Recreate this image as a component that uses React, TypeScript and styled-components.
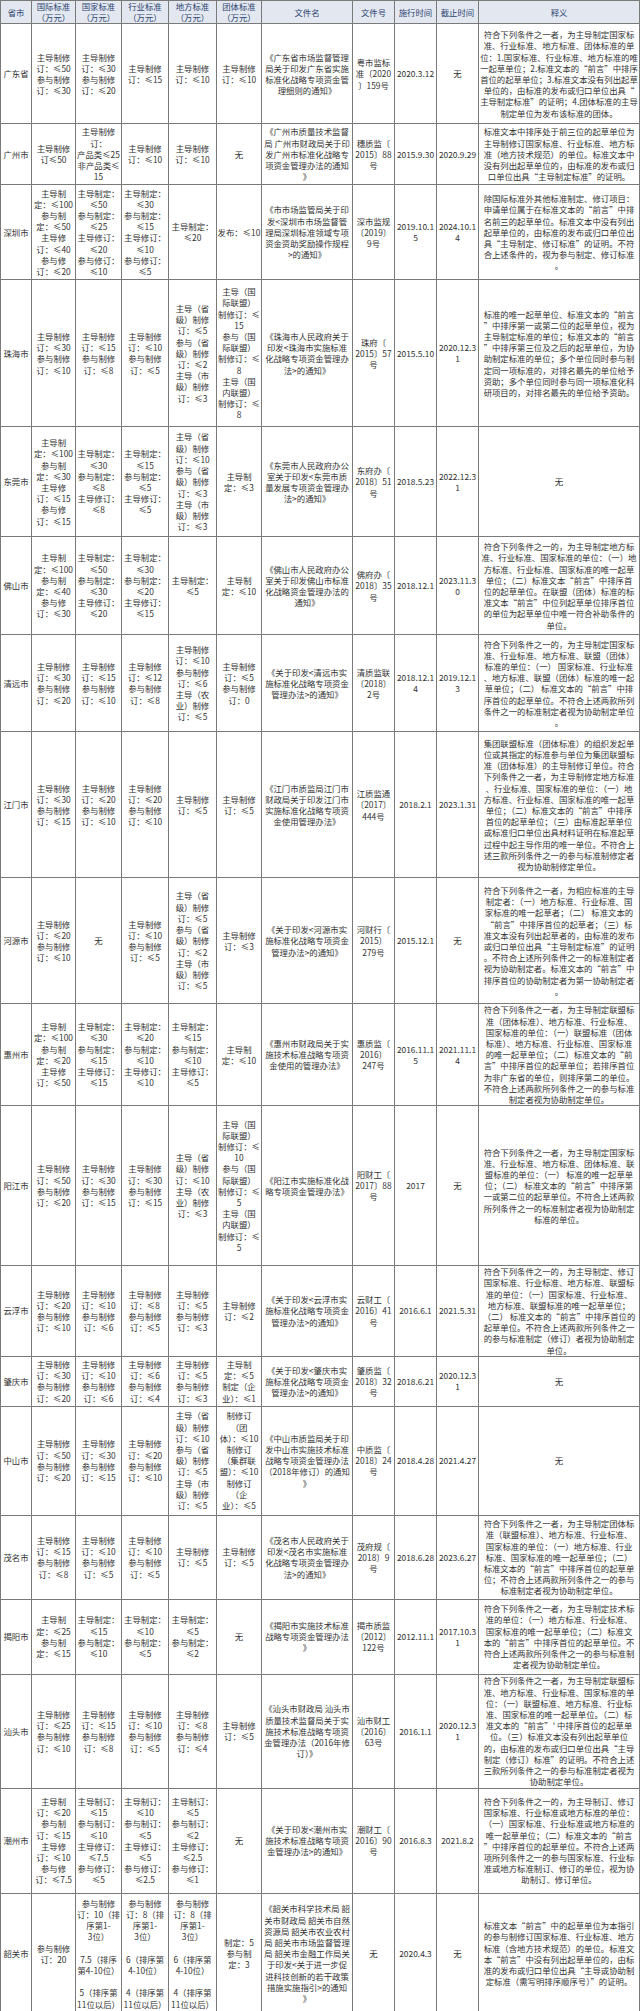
import React from "react";
import styled, { createGlobalStyle } from "styled-components";

const GlobalStyle = createGlobalStyle`
  html, body { margin: 0; padding: 0; background: #ffffff; }
  body { font-family: "Noto Sans CJK SC", "Noto Sans", sans-serif; }
`;

const Table = styled.table`
  border-collapse: collapse;
  table-layout: fixed;
  width: 639px;
  font-family: "Noto Sans CJK SC", "Noto Sans", sans-serif;
  font-size: 8.4px;
  line-height: 11.2px;
  color: #333333;
`;

const HeadRow = styled.tr`
  height: 23px;
`;

const HeadCell = styled.th`
  background: #e3e8f0;
  color: #2d4470;
  font-weight: normal;
  border: 1px solid #7a7a7a;
  text-align: center;
  vertical-align: middle;
  padding: 0;
  white-space: nowrap;
`;

const Row = styled.tr<{ $h: number }>`
  height: ${(p) => p.$h}px;
`;

const Cell = styled.td`
  border: 1px solid #7a7a7a;
  text-align: center;
  vertical-align: middle;
  padding: 0;
  white-space: nowrap;
  overflow: visible;
`;

const widths = [31, 44, 46, 47, 48, 45, 91, 42, 42, 42, 161];

const headers = [
  "省市",
  "国际标准|（万元）",
  "国家标准|（万元）",
  "行业标准|（万元）",
  "地方标准|（万元）",
  "团体标准|（万元）",
  "文件名",
  "文件号",
  "施行时间",
  "截止时间",
  "释义",
];

type RowData = { h: number; c: string[] };

const rows: RowData[] = [
  {
    h: 100,
    c: [
      "广东省",
      "主导制修|订：≤50|参与制修|订：≤30",
      "主导制修|订：≤30|参与制修|订：≤20",
      "主导制修|订：≤15",
      "主导制修|订：≤10",
      "主导制修|订：≤10",
      "《广东省市场监督管理|局关于印发广东省实施|标准化战略专项资金管|理细则的通知》",
      "粤市监标|准〔2020|〕159号",
      "2020.3.12",
      "无",
      "符合下列条件之一者，为主导制定国家标|准、行业标准、地方标准、团体标准的单|位：1.国家标准、行业标准、地方标准的唯|一起草单位；2.标准文本的“前言”中排序|首位的起草单位；3.标准文本没有列出起草|单位的，由标准的发布或归口单位出具“|主导制定标准”的证明；4.团体标准的主导|制定单位为发布该标准的团体。",
    ],
  },
  {
    h: 61,
    c: [
      "广州市",
      "主导制修|订≤50",
      "主导制修|订：|产品类≤25|非产品类≤|15",
      "主导制修|订：≤10",
      "主导制修|订：≤10",
      "无",
      "《广州市质量技术监督|局 广州市财政局关于印|发广州市标准化战略专|项资金管理办法的通知|》",
      "穗质监〔|2015〕88|号",
      "2015.9.30",
      "2020.9.29",
      "标准文本中排序处于前三位的起草单位为|主导制修订国家标准、行业标准、地方标|准（地方技术规范）的单位。标准文本中|没有列出起草单位的，由标准的发布或归|口单位出具“主导制定标准”的证明。",
    ],
  },
  {
    h: 95,
    c: [
      "深圳市",
      "主导制|定：≤100|参与制|定：≤50|主导修|订：≤40|参与修|订：≤20",
      "主导制定：|≤50|参与制定：|≤25|主导修订：|≤20|参与修订：|≤10",
      "主导制定：|≤30|参与制定：|≤15|主导修订：|≤10|参与修订：|≤5",
      "主导制定：|≤20",
      "发布：≤10",
      "《市市场监管局关于印|发<深圳市市场监督管|理局深圳标准领域专项|资金资助奖励操作规程|>的通知》",
      "深市监规|〔2019〕|9号",
      "2019.10.1|5",
      "2024.10.1|4",
      "除国际标准外其他标准制定、修订项目：|申请单位属于在标准文本的“前言”中排|名前三的起草单位。标准文本中没有列出|起草单位的，由标准的发布或归口单位出|具“主导制定、修订标准”的证明。不符|合上述条件的，视为参与制定、修订标准|。",
    ],
  },
  {
    h: 147,
    c: [
      "珠海市",
      "主导制修|订：≤30|参与制修|订：≤10",
      "主导制修|订：≤15|参与制修|订：≤8",
      "主导制修|订：≤10|参与制修|订：≤5",
      "主导（省|级）制修|订：≤5|参与（省|级）制修|订：≤2|主导（市|级）制修|订：≤3",
      "主导（国|际联盟）|制修订：≤|15|参与（国|际联盟）|制修订：≤|8|主导（国|内联盟）|制修订：≤|8",
      "《珠海市人民政府关于|印发<珠海市实施标准|化战略专项资金管理办|法>的通知》",
      "珠府〔|2015〕57|号",
      "2015.5.10",
      "2020.12.3|1",
      "标准的唯一起草单位、标准文本的“前言|”中排序第一或第二位的起草单位，视为|主导制定标准的单位；标准文本的“前言|”中排序第三位及之后的起草单位，为协|助制定标准的单位；多个单位同时参与制|定同一项标准的，对排名最先的单位给予|资助；多个单位同时参与同一项标准化科|研项目的，对排名最先的单位给予资助。",
    ],
  },
  {
    h: 110,
    c: [
      "东莞市",
      "主导制|定：≤100|参与制|定：≤30|主导修|订：≤15|参与修|订：≤15",
      "主导制定：|≤30|参与制定：|≤8|主导修订：|≤8",
      "主导制定：|≤15|参与制定：|≤5|主导修订：|≤5",
      "主导（省|级）制修|订：≤10|参与（省|级）制修|订：≤3|主导（市|级）制修|订：≤3",
      "主导制|定：≤3",
      "《东莞市人民政府办公|室关于印发<东莞市质|量发展专项资金管理办|法>的通知》",
      "东府办〔|2018〕51|号",
      "2018.5.23",
      "2022.12.3|1",
      "无",
    ],
  },
  {
    h: 98,
    c: [
      "佛山市",
      "主导制|定：≤100|参与制|定：≤40|参与修|订：≤30",
      "主导制定：|≤50|参与制定：|≤30|主导修订：|≤20",
      "主导制定：|≤30|参与制定：|≤20|主导修订：|≤15",
      "主导制定：|≤5",
      "主导制|定：≤10",
      "《佛山市人民政府办公|室关于印发佛山市标准|化战略资金管理办法的|通知》",
      "佛府办〔|2018〕35|号",
      "2018.12.1",
      "2023.11.3|0",
      "符合下列条件之一的，为主导制定地方标|准、行业标准、国家标准的单位：（一）地|方标准、行业标准、国家标准的唯一起草|单位；（二）标准文本“前言”中排序首|位的起草单位。在联盟（团体）标准的标|准文本“前言”中位列起草单位排序首位|的单位为起草单位中唯一符合补助条件的|单位。",
    ],
  },
  {
    h: 97,
    c: [
      "清远市",
      "主导制修|订：≤30|参与制修|订：≤20",
      "主导制修|订：≤15|参与制修|订：≤10",
      "主导制修|订：≤12|参与制修|订：≤8",
      "主导制修|订：≤10|参与制修|订：≤6|主导（农|业）制修|订：≤5",
      "主导制修|订：≤5|参与制修|订：0",
      "《关于印发<清远市实|施标准化战略专项资金|管理办法>的通知》",
      "清质监联|〔2018〕|2号",
      "2018.12.1|4",
      "2019.12.1|3",
      "符合下列条件之一的，为主导制定国家标|准、行业标准、地方标准、联盟（团体）|标准的单位：（一） 国家标准、行业标准|、地方标准、联盟（团体）标准的唯一起|草单位；（二） 标准文本的“前言”中排|序首位的起草单位。不符合上述两款所列|条件之一的标准制定者视为协助制定单位|。",
    ],
  },
  {
    h: 146,
    c: [
      "江门市",
      "主导制修|订：≤30|参与制修|订：≤15",
      "主导制修|订：≤20|参与制修|订：≤10",
      "主导制修|订：≤20|参与制修|订：≤10",
      "主导制修|订：≤5",
      "主导制修|订：≤5",
      "《江门市质监局江门市|财政局关于印发江门市|实施标准化战略专项资|金使用管理办法》",
      "江质监通|〔2017〕|444号",
      "2018.2.1",
      "2023.1.31",
      "集团联盟标准（团体标准）的组织发起单|位或其指定的标准参与单位为集团联盟标|准（团体标准）的主导制修订单位。符合|下列条件之一者，为主导制修定地方标准|、行业标准、国家标准的单位：（一）地|方标准、行业标准、国家标准的唯一起草|单位；（二）标准文本的“前言”中排序|首位的起草单位；（三）由标准起草单位|或标准归口单位出具材料证明在标准起草|过程中起主导作用的唯一单位。不符合上|述三款所列条件之一的参与标准制修定者|视为协助制修定单位。",
    ],
  },
  {
    h: 126,
    c: [
      "河源市",
      "主导制修|订：≤20|参与制修|订：≤10",
      "无",
      "主导制修|订：≤10|参与制修|订：≤5",
      "主导（省|级）制修|订：≤5|参与（省|级）制修|订：≤2|主导（市|级）制修|订：≤5",
      "主导制修|订：≤3",
      "《关于印发<河源市实|施标准化战略专项资金|管理办法>的通知》",
      "河财行〔|2015〕|279号",
      "2015.12.1",
      "无",
      "符合下列条件之一者，为相应标准的主导|制定者：（一）地方标准、行业标准、国|家标准的唯一起草者；（二） 标准文本的|“前言”中排序首位的起草者；（三）标|准文本没有列出起草者的，由标准的发布|或归口单位出具“主导制定标准”的证明|。不符合上述所列条件之一的标准制定者|视为协助制定者。标准文本的“前言”中|排序首位的协助制定者为第一协助制定者|。",
    ],
  },
  {
    h: 101,
    c: [
      "惠州市",
      "主导制|定：≤100|参与制|定：≤20|主导修|订：≤50",
      "主导制定：|≤30|参与制定：|≤15|主导修订：|≤15",
      "主导制定：|≤20|参与制定：|≤10|主导修订：|≤10",
      "主导制定：|≤15|参与制定：|≤10|主导修订：|≤5",
      "主导制|定：≤10",
      "《惠州市财政局关于实|施技术标准战略专项资|金使用的管理办法》",
      "惠质监〔|2016〕|247号",
      "2016.11.1|5",
      "2021.11.1|4",
      "符合下列条件之一者，为主导制定联盟标|准（团体标准）、地方标准、行业标准、|国家标准的单位：（一）联盟标准（团体|标准）、地方标准、行业标准、国家标准|的唯一起草单位；（二）标准文本的“前|言”中排序首位的起草单位；若排序首位|为非广东省的单位，则排序第二的单位。|不符合上述两款所列条件之一的参与标准|制定者视为协助制定单位。",
    ],
  },
  {
    h: 160,
    c: [
      "阳江市",
      "主导制修|订：≤50|参与制修|订：≤20",
      "主导制修|订：≤30|参与制修|订：≤15",
      "主导制修|订：≤30|参与制修|订：≤15",
      "主导（省|级）制修|订：≤10|主导（农|业）制修|订：≤3",
      "主导（国|际联盟）|制修订：≤|10|参与（国|际联盟）|制修订：≤|5|主导（国|内联盟）|制修订：≤|5",
      "《阳江市实施标准化战|略专项资金管理办法》",
      "阳财工〔|2017〕88|号",
      "2017",
      "无",
      "符合下列条件之一者，为主导制定国家标|准、行业标准、地方标准、团体标准、联|盟标准的单位：（一） 标准的唯一起草单|位；（二） 标准文本的“前言”中排序第|一或第二位的起草单位。不符合上述两款|所列条件之一的标准制定者视为协助制定|标准的单位。",
    ],
  },
  {
    h: 87,
    c: [
      "云浮市",
      "主导制修|订：≤20|参与制修|订：≤10",
      "主导制修|订：≤10|参与制修|订：≤6",
      "主导制修|订：≤8|参与制修|订：≤5",
      "主导制修|订：≤5|参与制修|订：≤3",
      "主导制修|订：≤2",
      "《关于印发<云浮市实|施标准化战略专项资金|管理办法>的通知》",
      "云财工〔|2016〕41|号",
      "2016.6.1",
      "2021.5.31",
      "符合下列条件之一的，为主导制定、修订|国家标准、行业标准、地方标准、联盟标|准的单位：（一）国家标准、行业标准、|地方标准、联盟标准的唯一起草单位；|（二） 标准文本的“前言”中排序首位的|起草单位。不符合上述两款所列条件之一|的参与标准制定（修订）者视为协助制定|单位。",
    ],
  },
  {
    h: 50,
    c: [
      "肇庆市",
      "主导制修|订：≤30|参与制修|订：≤20",
      "主导制修|订：≤10|参与制修|订：≤6",
      "主导制修|订：≤6|参与制修|订：≤4",
      "主导制修|订：≤5|参与制修|订：≤3",
      "主导制|定：≤5|制定（企|业）：≤1",
      "《关于印发<肇庆市实|施标准化战略专项资金|管理办法>的通知》",
      "肇质监〔|2018〕32|号",
      "2018.6.21",
      "2020.12.3|1",
      "无",
    ],
  },
  {
    h: 109,
    c: [
      "中山市",
      "主导制修|订：≤50|参与制修|订：≤20",
      "主导制修|订：≤30|参与制修|订：≤15",
      "主导制修|订：≤20|参与制修|订：≤10",
      "主导（省|级）制修|订：≤10|参与（省|级）制修|订：≤5|主导（市|级）制修|订：≤5",
      "制修订|（团|体）：≤10|制修订|（集群联|盟）：≤10|制修订|（企|业）：≤5",
      "《中山市质监局关于印|发中山市实施技术标准|战略专项资金管理办法|（2018年修订）的通知|》",
      "中质监〔|2018〕24|号",
      "2018.4.28",
      "2021.4.27",
      "无",
    ],
  },
  {
    h: 84,
    c: [
      "茂名市",
      "主导制修|订：≤15|参与制修|订：≤8",
      "主导制修|订：≤10|参与制修|订：≤5",
      "主导制修|订：≤10|参与制修|订：≤5",
      "主导制修|订：≤5",
      "主导制修|订：≤5",
      "《茂名市人民政府关于|印发<茂名市实施标准|化战略专项资金管理办|法>的通知》",
      "茂府规〔|2018〕9|号",
      "2018.6.28",
      "2023.6.27",
      "符合下列条件之一者，为主导制定团体标|准（联盟标准）、地方标准、行业标准、|国家标准的单位：（一）地方标准、行业|标准、国家标准的唯一起草单位；（二）|标准文本的“前言”中排序首位的起草单|位；不符合上述两款所列条件之一的参与|标准制定者视为协助制定单位。",
    ],
  },
  {
    h: 75,
    c: [
      "揭阳市",
      "主导制|定：≤25|参与制|定：≤15",
      "主导制定：|≤15|参与制定：|≤10",
      "主导制定：|≤10|参与制定：|≤5",
      "主导制定：|≤5|参与制定：|≤2",
      "无",
      "《揭阳市实施技术标准|战略专项资金管理办法|》",
      "揭市质监|〔2012〕|122号",
      "2012.11.1",
      "2017.10.3|1",
      "符合下列条件之一者，为主导制定技术标|准的单位：（一）地方标准、行业标准、|国家标准的唯一起草单位；（二）标准文|本的“前言”中排序首位的起草单位。不|符合上述两款所列条件之一的参与标准制|定者视为协助制定单位。",
    ],
  },
  {
    h: 114,
    c: [
      "汕头市",
      "主导制修|订：≤25|参与制修|订：≤10",
      "主导制修|订：≤15|参与制修|订：≤8",
      "主导制修|订：≤10|参与制修|订：≤5",
      "主导制修|订：≤8|参与制修|订：≤4",
      "主导制修|订：≤5",
      "《汕头市财政局 汕头市|质量技术监督局关于实|施技术标准战略专项资|金管理办法（2016年修|订）》",
      "汕市财工|〔2016〕|63号",
      "2016.1.1",
      "2020.12.3|1",
      "符合下列条件之一者，为主导制定联盟标|准、地方标准、行业标准、国家标准的单|位：（一）联盟标准、地方标准、行业标|准、国家标准的唯一起草单位。（二）标|准文本的“前言”' 中排序首位的起草单|位。（三）标准文本没有列出起草单位|的，由标准的发布或归口单位出具“主导|制定（修订）标准”的证明。不符合上述|三款所列条件之一的参与标准制定者视为|协助制定单位。",
    ],
  },
  {
    h: 105,
    c: [
      "潮州市",
      "主导制|订：≤20|参与制|订：≤15|主导修|订：≤10|参与修|订：≤7.5",
      "主导制订：|≤15|参与制订：|≤10|主导修订：|≤7.5|参与修订：|≤5",
      "主导制订：|≤10|参与制订：|≤5|主导修订：|≤5|参与修订：|≤2.5",
      "主导制订：|≤5|参与制订：|≤2|主导修订：|≤2.5|参与修订：|≤1",
      "无",
      "《关于印发<潮州市实|施技术标准战略专项资|金管理办法>的通知》",
      "潮财工〔|2016〕90|号",
      "2016.8.3",
      "2021.8.2",
      "符合下列条件之一的，为主导制订、修订|国家标准、行业标准或地方标准的单位：|（一）国家标准、行业标准或地方标准的|唯一起草单位；（二）标准文本的“前言|”中排序首位的起草单位。不符合上述两|项所列条件之一的参与国家标准、行业标|准或地方标准制订、修订的单位，视为协|助制订、修订单位。",
    ],
  },
  {
    h: 121,
    c: [
      "韶关市",
      "参与制修|订：20",
      "参与制修|订：10（排|序第1-|3位）||7.5（排序|第4-10位）||5（排序第|11位以后）",
      "参与制修|订：8（排|序第1-|3位）||6（排序第|4-10位）||4（排序第|11位以后）",
      "参与制修|订：8（排|序第1-|3位）||6（排序第|4-10位）||4（排序第|11位以后）",
      "制定：5|参与制|定：3",
      "《韶关市科学技术局 韶|关市财政局 韶关市自然|资源局 韶关市农业农村|局 韶关市市场监督管理|局 韶关市金融工作局关|于印发<关于进一步促|进科技创新的若干政策|措施实施指引>的通知|》",
      "无",
      "2020.4.3",
      "无",
      "标准文本“前言”中的起草单位为本指引|的参与制修订国家标准、行业标准、地方|标准（含地方技术规范）的单位。标准文|本“前言”中没有列出起草单位的，由标|准的发布或归口单位出具“主导或协助制|定标准（需写明排序顺序号）”的证明。",
    ],
  },
];

const Lines: React.FC<{ text: string }> = ({ text }) => {
  const parts = text.split("|");
  return (
    <>
      {parts.map((p, i) => (
        <React.Fragment key={i}>
          {i > 0 && <br />}
          {p === "" ? "\u00a0" : p}
        </React.Fragment>
      ))}
    </>
  );
};

export default function App() {
  return (
    <>
      <GlobalStyle />
      <Table>
        <colgroup>
          {widths.map((w, i) => (
            <col key={i} style={{ width: w }} />
          ))}
        </colgroup>
        <thead>
          <HeadRow>
            {headers.map((h, i) => (
              <HeadCell key={i}>
                <Lines text={h} />
              </HeadCell>
            ))}
          </HeadRow>
        </thead>
        <tbody>
          {rows.map((r, ri) => (
            <Row key={ri} $h={r.h}>
              {r.c.map((c, ci) => (
                <Cell key={ci}>
                  <Lines text={c} />
                </Cell>
              ))}
            </Row>
          ))}
        </tbody>
      </Table>
    </>
  );
}
